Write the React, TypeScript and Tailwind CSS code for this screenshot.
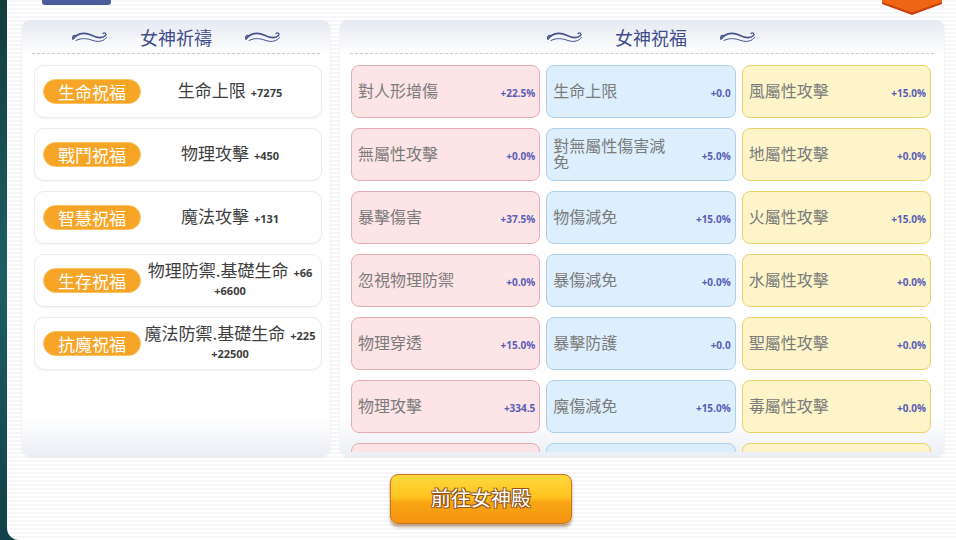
import React from "react";

const CJK = "font-['Noto_Sans_CJK_TC','Noto_Sans_CJK_SC',sans-serif]";
const NUM = "font-['Open_Sans','Lato',sans-serif]";

function Swirl() {
  return (
    <svg width="37" height="13" viewBox="0 0 37 13" fill="none">
      <path d="M2 9 C6 3 14 2 20 5 C26 8 31 9 34.5 5.5" stroke="#45528f" strokeWidth="1.6" strokeLinecap="round" />
      <path d="M5 10.5 C11 7.5 16 8.5 22 10.5 C28 12.5 33 11 35.5 7.5" stroke="#45528f" strokeWidth="1" strokeLinecap="round" />
      <path d="M2 9 C0.5 6.5 3 4.5 5.5 6" stroke="#45528f" strokeWidth="1.2" strokeLinecap="round" />
      <path d="M34.5 5.5 C36 3.5 33.5 2 32 3.5" stroke="#45528f" strokeWidth="1.2" strokeLinecap="round" />
    </svg>
  );
}

function PanelHeader({ title, shift }: { title: string; shift?: boolean }) {
  return (
    <div className="h-[34px] shrink-0 rounded-t-[8px] bg-[linear-gradient(to_bottom,#e6e9f1,#ffffff)] px-[10px]">
      <div className="flex h-full items-center border-b border-dashed border-[#c9ccd5]">
        <div className={`flex flex-1 items-center justify-center gap-[32px] ${shift ? "pl-[18px]" : ""}`}>
          <Swirl />
          <span className={`${CJK} text-[18px] leading-none text-[#414e8c]`}>{title}</span>
          <Swirl />
        </div>
      </div>
    </div>
  );
}

const leftItems = [
  { badge: "生命祝福", text: "生命上限", val: "+7275" },
  { badge: "戰鬥祝福", text: "物理攻擊", val: "+450" },
  { badge: "智慧祝福", text: "魔法攻擊", val: "+131" },
  { badge: "生存祝福", text: "物理防禦.基礎生命", val: "+66", val2: "+6600" },
  { badge: "抗魔祝福", text: "魔法防禦.基礎生命", val: "+225", val2: "+22500" },
];

type Cell = { label: string; val: string };
const rows: Cell[][] = [
  [{ label: "對人形增傷", val: "+22.5%" }, { label: "生命上限", val: "+0.0" }, { label: "風屬性攻擊", val: "+15.0%" }],
  [{ label: "無屬性攻擊", val: "+0.0%" }, { label: "對無屬性傷害減免", val: "+5.0%" }, { label: "地屬性攻擊", val: "+0.0%" }],
  [{ label: "暴擊傷害", val: "+37.5%" }, { label: "物傷減免", val: "+15.0%" }, { label: "火屬性攻擊", val: "+15.0%" }],
  [{ label: "忽視物理防禦", val: "+0.0%" }, { label: "暴傷減免", val: "+0.0%" }, { label: "水屬性攻擊", val: "+0.0%" }],
  [{ label: "物理穿透", val: "+15.0%" }, { label: "暴擊防護", val: "+0.0" }, { label: "聖屬性攻擊", val: "+0.0%" }],
  [{ label: "物理攻擊", val: "+334.5" }, { label: "魔傷減免", val: "+15.0%" }, { label: "毒屬性攻擊", val: "+0.0%" }],
  [{ label: "", val: "" }, { label: "", val: "" }, { label: "", val: "" }],
];

const cellStyles = [
  "bg-[#fde4e7] border-[#e9abb3]",
  "bg-[#ddeffd] border-[#afcfe8]",
  "bg-[#fdf5c9] border-[#e8d36a]",
];

export default function App() {
  return (
    <div className="relative flex h-[540px] w-[956px] overflow-hidden bg-[linear-gradient(to_bottom,#123c3a,#1d5f66_50%,#114048)]">
      <div className="relative ml-[7px] flex flex-1 flex-col rounded-bl-[12px] bg-[repeating-linear-gradient(to_bottom,#f7f7f9_0px,#f7f7f9_2px,#ffffff_2px,#ffffff_4px)]">
        <div className="absolute left-[35px] top-0 h-[5px] w-[69px] rounded-b-[3px] bg-[#4b5b9b]" />
        <svg className="absolute left-[875px] top-0" width="60" height="16" viewBox="0 0 60 16">
          <path d="M0 0 H60 V4 L30 15 L0 4 Z" fill="#c9400c" />
          <path d="M0 0 H60 V2 L30 12.5 L0 2 Z" fill="#f06414" />
        </svg>

        <div className="flex gap-[10px] pl-[15px] pt-[20px]">
          {/* Left panel */}
          <div className="flex h-[436px] w-[308px] flex-col rounded-[8px] bg-[linear-gradient(to_bottom,#ffffff_0%,#ffffff_91%,#eceff5_100%)] shadow-[0_1px_3px_rgba(0,0,0,0.08)]">
            <PanelHeader title="女神祈禱" />
            <div className="mt-[11px] flex flex-col gap-[10px] pl-[12px] pr-[8px]">
              {leftItems.map((it) => (
                <div key={it.badge} className="flex h-[53px] items-center rounded-[10px] border-[1.5px] border-[#ebebef] bg-white pl-[8px] shadow-[0_1px_2px_rgba(0,0,0,0.04)]">
                  <div className={`${CJK} flex h-[25px] w-[98px] shrink-0 items-center justify-center rounded-full border border-[#fbc463] bg-[#f7a526] pb-[1px] text-[17px] leading-none text-white`}>
                    {it.badge}
                  </div>
                  <div className="flex flex-1 flex-col items-center pb-[2px] pr-[2px]">
                    <div className="whitespace-nowrap leading-[19px]">
                      <span className={`${CJK} text-[17px] text-[#3e3e3e]`}>{it.text}</span>
                      <span className={`${NUM} ml-[5px] text-[11px] font-bold text-[#3e3e3e]`}>{it.val}</span>
                    </div>
                    {it.val2 && (
                      <div className={`${NUM} text-[11px] font-bold leading-[17px] text-[#3e3e3e]`}>{it.val2}</div>
                    )}
                  </div>
                </div>
              ))}
            </div>
          </div>

          {/* Right panel */}
          <div className="flex h-[436px] w-[604px] flex-col rounded-[8px] bg-[linear-gradient(to_bottom,#ffffff_0%,#ffffff_91%,#eceff5_100%)] shadow-[0_1px_3px_rgba(0,0,0,0.08)]">
            <PanelHeader title="女神祝福" shift />
            <div className="mt-[11px] h-[387px] overflow-hidden pl-[11px]">
              <div className="grid w-[580px] grid-cols-3 gap-x-[6px] gap-y-[10px]">
                {rows.flatMap((r, ri) =>
                  r.map((c, ci) => (
                    <div key={`${ri}-${ci}`} className={`flex h-[53px] items-center rounded-[8px] border-[1.5px] pl-[6px] pr-[4px] ${cellStyles[ci]}`}>
                      <div className={`${CJK} w-[118px] pb-[4px] text-[16px] leading-[16px] text-[#7b7b7b]`}>{c.label}</div>
                      <div className={`${NUM} mt-[3px] flex-1 text-right text-[10px] font-bold text-[#5a5db6]`}>{c.val}</div>
                    </div>
                  ))
                )}
              </div>
            </div>
          </div>
        </div>

        {/* Button */}
        <div className="flex pl-[383px] pt-[18px]">
          <div className={`${CJK} flex h-[50px] w-[182px] items-center justify-center rounded-[8px] border-[1.5px] border-[#c9741a] bg-[linear-gradient(to_bottom,#ffd83e_0%,#ffc41f_45%,#f9a514_58%,#f4930f_100%)] pb-[2px] text-[20px] text-white shadow-[0_3px_3px_rgba(110,55,0,0.45)] [text-shadow:-1px_-1px_0_#95561c,1px_-1px_0_#95561c,-1px_1px_0_#95561c,1px_1px_0_#95561c]`}>
            前往女神殿
          </div>
        </div>
      </div>
    </div>
  );
}
